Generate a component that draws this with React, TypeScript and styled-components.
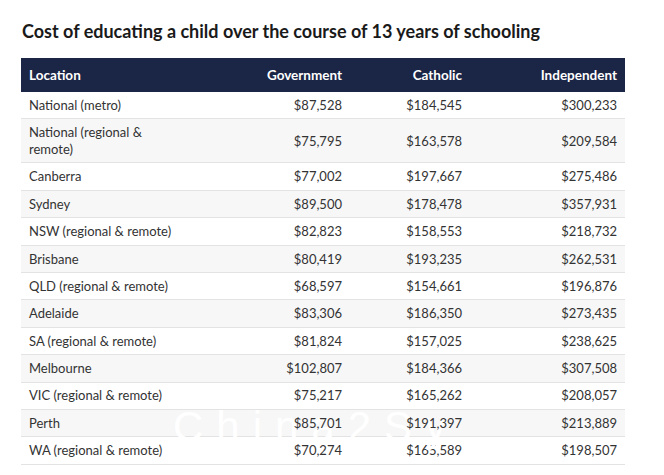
import React from "react";
import styled, { createGlobalStyle } from "styled-components";

const Global = createGlobalStyle`
  html, body { margin: 0; padding: 0; background: #fff; }
  body { font-family: "Lato", "Liberation Sans", sans-serif; color: #333; }
`;

const Page = styled.div`
  position: relative;
  width: 664px;
  height: 475px;
  overflow: hidden;
  padding: 20px 0 0 21px;
  box-sizing: border-box;
`;

const Title = styled.h2`
  margin: 0 0 16px 1px;
  font-size: 18px;
  line-height: 22px;
  font-weight: 700;
  color: #1a1a1a;
`;

const Table = styled.table`
  width: 604px;
  border-collapse: collapse;
  table-layout: fixed;
  font-size: 13px;
`;

const Col = styled.col<{ $w: number }>`
  width: ${(p) => p.$w}px;
`;

const HeadCell = styled.th<{ $align?: string }>`
  background: #1b2545;
  color: #fff;
  font-weight: 700;
  font-size: 13.5px;
  text-align: ${(p) => p.$align || "right"};
  height: 34px;
  padding: 0 8px;
  box-sizing: border-box;
`;

const Row = styled.tr<{ $alt: boolean }>`
  background: ${(p) => (p.$alt ? "#f7f7f7" : "#fff")};
  border-bottom: 1px solid #e3e3e3;
`;

const Cell = styled.td<{ $align?: string; $lift: boolean }>`
  position: ${(p) => (p.$lift ? "relative" : "static")};
  z-index: ${(p) => (p.$lift ? 2 : "auto")};
  padding: 4.85px 8px;
  line-height: 16.7px;
  text-align: ${(p) => p.$align || "right"};
  color: #333;
`;

const Watermark = styled.div`
  position: absolute;
  z-index: 1;
  left: 173px;
  top: 403px;
  font-family: "Liberation Sans", sans-serif;
  font-size: 42px;
  line-height: 48px;
  letter-spacing: 13px;
  color: #fff;
  pointer-events: none;
`;

const rows: [string, string, string, string][] = [
  ["National (metro)", "$87,528", "$184,545", "$300,233"],
  ["National (regional & remote)", "$75,795", "$163,578", "$209,584"],
  ["Canberra", "$77,002", "$197,667", "$275,486"],
  ["Sydney", "$89,500", "$178,478", "$357,931"],
  ["NSW (regional & remote)", "$82,823", "$158,553", "$218,732"],
  ["Brisbane", "$80,419", "$193,235", "$262,531"],
  ["QLD (regional & remote)", "$68,597", "$154,661", "$196,876"],
  ["Adelaide", "$83,306", "$186,350", "$273,435"],
  ["SA (regional & remote)", "$81,824", "$157,025", "$238,625"],
  ["Melbourne", "$102,807", "$184,366", "$307,508"],
  ["VIC (regional & remote)", "$75,217", "$165,262", "$208,057"],
  ["Perth", "$85,701", "$191,397", "$213,889"],
  ["WA (regional & remote)", "$70,274", "$165,589", "$198,507"],
];

export default function App() {
  return (
    <>
      <Global />
      <Page>
        <Title>Cost of educating a child over the course of 13 years of schooling</Title>
        <Table>
          <colgroup>
            <Col $w={170} />
            <Col $w={159} />
            <Col $w={120} />
            <Col $w={155} />
          </colgroup>
          <thead>
            <tr>
              <HeadCell $align="left">Location</HeadCell>
              <HeadCell>Government</HeadCell>
              <HeadCell>Catholic</HeadCell>
              <HeadCell>Independent</HeadCell>
            </tr>
          </thead>
          <tbody>
            {rows.map((r, i) => {
              const lift = i < rows.length - 1;
              return (
                <Row key={r[0]} $alt={i % 2 === 1}>
                  <Cell $align="left" $lift={lift}>{r[0]}</Cell>
                  <Cell $lift={lift}>{r[1]}</Cell>
                  <Cell $lift={lift}>{r[2]}</Cell>
                  <Cell $lift={lift}>{r[3]}</Cell>
                </Row>
              );
            })}
          </tbody>
        </Table>
        <Watermark>China2Sy</Watermark>
      </Page>
    </>
  );
}
